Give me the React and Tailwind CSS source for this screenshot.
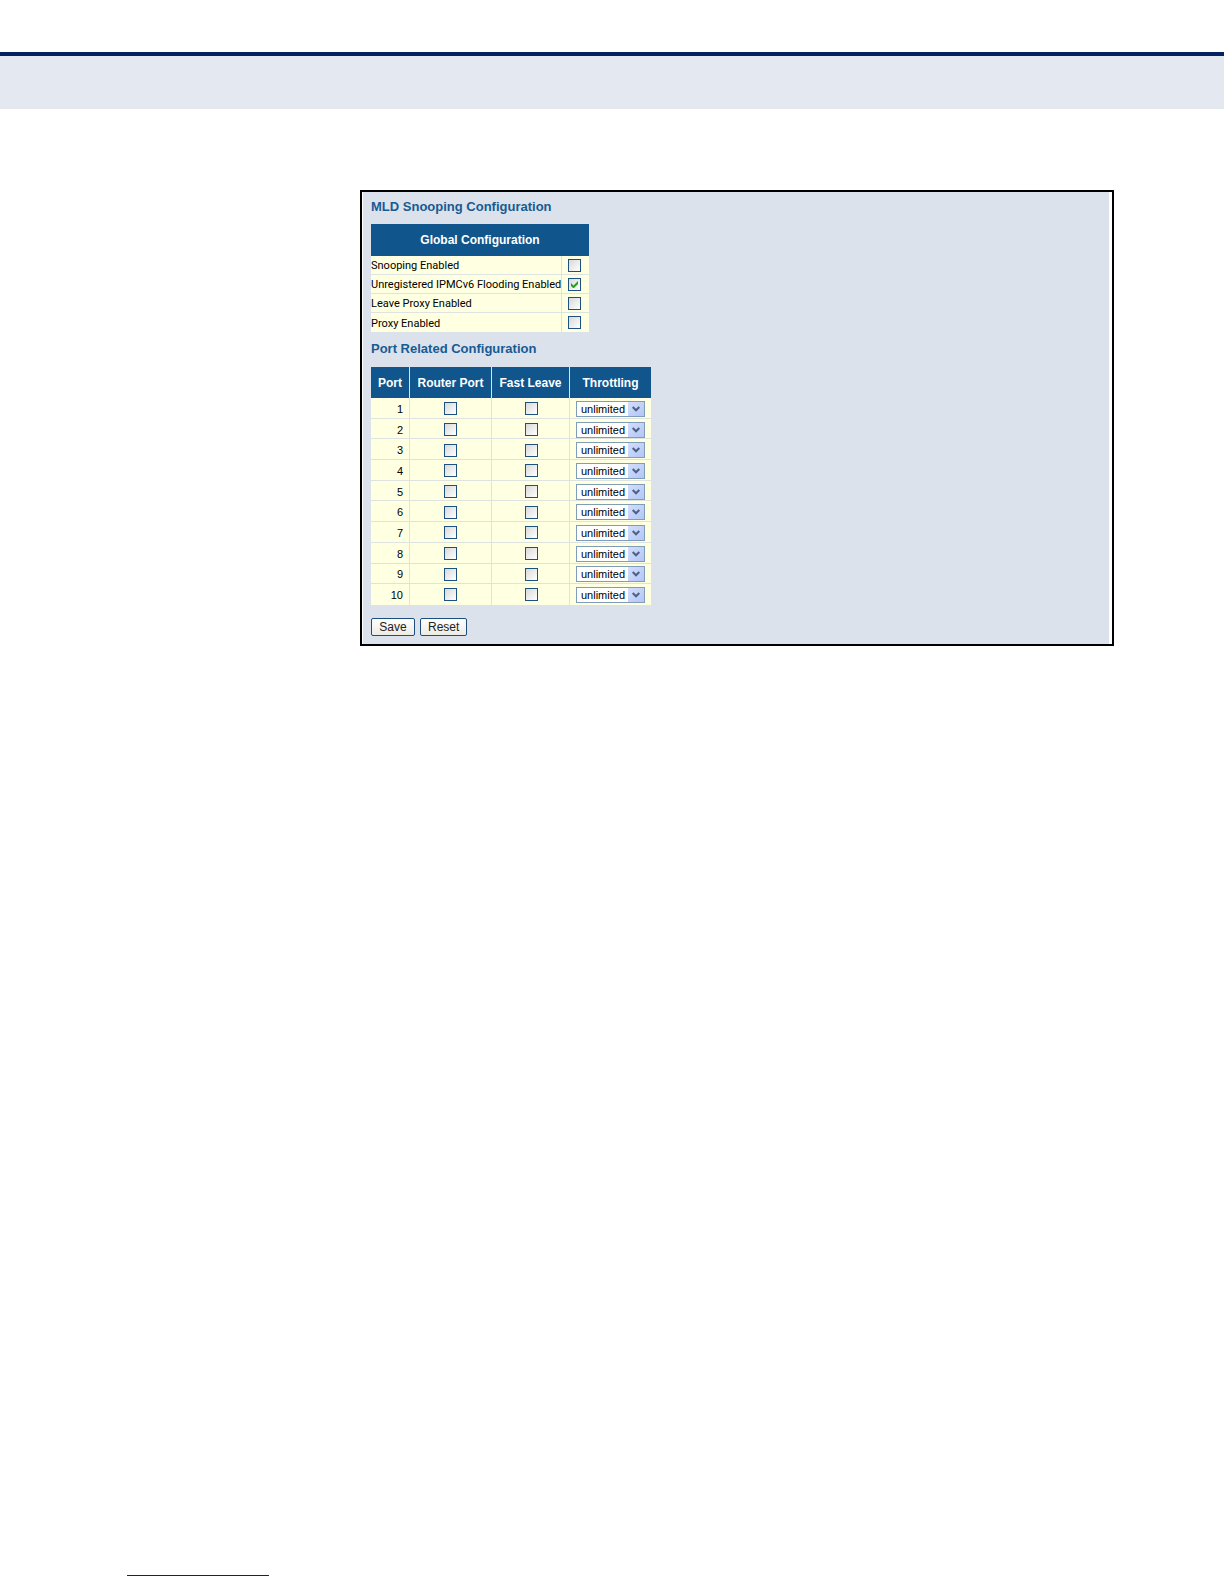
import React, { useState } from 'react';

const globalOptions = [
  { id: 'snooping', label: 'Snooping Enabled', on: false },
  { id: 'flooding', label: 'Unregistered IPMCv6 Flooding Enabled', on: true },
  { id: 'leave-proxy', label: 'Leave Proxy Enabled', on: false },
  { id: 'proxy', label: 'Proxy Enabled', on: false },
];

const ports = [1, 2, 3, 4, 5, 6, 7, 8, 9, 10];
const limits = ['unlimited', '1', '2', '3', '4', '5', '6', '7', '8', '9', '10'];

function Checkbox({ id, label, defaultChecked = false }) {
  const [checked, setChecked] = useState(defaultChecked);
  return (
    <span className="relative mx-auto block h-[13px] w-[13px]">
      <input
        id={id}
        type="checkbox"
        aria-label={label}
        checked={checked}
        onChange={(e) => setChecked(e.target.checked)}
        className="block h-[13px] w-[13px] appearance-none border border-[#1c5180] bg-linear-to-br from-[#d9d9d9] to-white"
      />
      {checked && (
        <svg viewBox="0 0 13 13" className="pointer-events-none absolute inset-0 h-[13px] w-[13px]" fill="#21a121">
          <path d="M3 5v3l2 2h1l4-4V3L5.500 7.500z" />
        </svg>
      )}
    </span>
  );
}

function Throttling({ port }) {
  return (
    <span className="relative mx-auto block h-4 w-[69px]">
      <select
        aria-label={`Throttling, port ${port}`}
        className="block h-4 w-full appearance-none border border-[#7f9db9] bg-white pl-1 text-[11px] leading-[14px] text-black"
      >
        {limits.map((l) => (
          <option key={l}>{l}</option>
        ))}
      </select>
      <span className="pointer-events-none absolute top-px right-px flex h-[14px] w-4 items-center justify-center bg-linear-to-br from-[#d3defc] to-[#b3c6f6]">
        <svg viewBox="0 0 8 6" className="h-[6px] w-[8px]" fill="none" stroke="#4d6185" strokeWidth="2">
          <path d="M0.700 1 4 4.300 7.300 1" />
        </svg>
      </span>
    </span>
  );
}

function Button({ children, type }) {
  return (
    <button
      type={type}
      className="h-[18px] min-w-11 rounded-xs border border-[#1c4f80] bg-linear-to-b from-white to-[#ecebe5] px-[7px] text-[12px] leading-4 text-[#222]"
    >
      {children}
    </button>
  );
}

const heading = 'text-[13px] leading-4 font-bold text-[#185a92]';
const th = 'bg-[#10558c] p-0 text-center text-[12px] font-bold text-white';
const line = 'border-[#dfe3e0]';

export default function App() {
  return (
    <div className="flex min-h-screen flex-col bg-white font-['Liberation_Sans',Arial,sans-serif] text-black">
      <header className="mt-[52px] h-[57px] border-t-4 border-[#06215f] bg-[#e4e8f0]" />

      <main className="mt-[81px] mr-[110px] ml-[360px] border-2 border-black bg-white pr-[3px] pl-px">
        <form className="bg-[#dbe2ec] px-2 pt-[7px] pb-2" onSubmit={(e) => e.preventDefault()}>
          <h1 className={heading}>MLD Snooping Configuration</h1>

          <table className="mt-[9px] w-[218px] table-fixed border-separate border-spacing-0 bg-[#ffffe1] text-[11px] leading-4">
            <colgroup>
              <col />
              <col className="w-[27px]" />
            </colgroup>
            <thead>
              <tr className="h-8">
                <th colSpan={2} className={th}>Global Configuration</th>
              </tr>
            </thead>
            <tbody>
              {globalOptions.map((o) => (
                <tr key={o.id} className="group h-[19px]">
                  <td className={`border-r border-b p-0 whitespace-nowrap group-last:border-b-0 ${line}`}>
                    <label htmlFor={o.id} className="block pt-[2px] font-[Roboto,Arial,sans-serif]">{o.label}</label>
                  </td>
                  <td className={`border-b p-0 pr-[2px] group-last:border-b-0 ${line}`}>
                    <Checkbox id={o.id} defaultChecked={o.on} />
                  </td>
                </tr>
              ))}
            </tbody>
          </table>

          <h2 className={`mt-[9px] ${heading}`}>Port Related Configuration</h2>

          <table className="mt-[10px] h-[238px] w-[280px] table-fixed border-separate border-spacing-0 bg-[#ffffe1] text-[11px] leading-4">
            <colgroup>
              <col className="w-[39px]" />
              <col className="w-[82px]" />
              <col className="w-[78px]" />
              <col />
            </colgroup>
            <thead>
              <tr className="h-[31px]">
                <th className={`border-r border-[#dbe2ec] ${th}`}>Port</th>
                <th className={`border-r border-[#dbe2ec] ${th}`}>Router Port</th>
                <th className={`border-r border-[#dbe2ec] ${th}`}>Fast Leave</th>
                <th className={th}>Throttling</th>
              </tr>
            </thead>
            <tbody>
              {ports.map((p) => (
                <tr key={p} className="group h-5">
                  <td className={`border-r border-b p-0 pt-[2px] pr-[6px] text-right group-last:border-b-0 group-last:pt-0 ${line}`}>{p}</td>
                  <td className={`border-r border-b p-0 pt-[2px] group-last:border-b-0 group-last:pt-0 ${line}`}>
                    <Checkbox id={`router-${p}`} label={`Router Port ${p}`} />
                  </td>
                  <td className={`border-r border-b p-0 pt-[2px] pl-[2px] group-last:border-b-0 group-last:pt-0 ${line}`}>
                    <Checkbox id={`leave-${p}`} label={`Fast Leave ${p}`} />
                  </td>
                  <td className={`border-b p-0 pt-[2px] group-last:border-b-0 group-last:pt-0 ${line}`}>
                    <Throttling port={p} />
                  </td>
                </tr>
              ))}
            </tbody>
          </table>

          <div className="mt-[13px] flex gap-[5px]">
            <Button type="submit">Save</Button>
            <Button type="reset">Reset</Button>
          </div>
        </form>
      </main>

      <footer className="mt-auto pb-2 pl-[127px]">
        <hr className="h-px w-[142px] border-0 bg-[#1414a0]" />
      </footer>
    </div>
  );
}
